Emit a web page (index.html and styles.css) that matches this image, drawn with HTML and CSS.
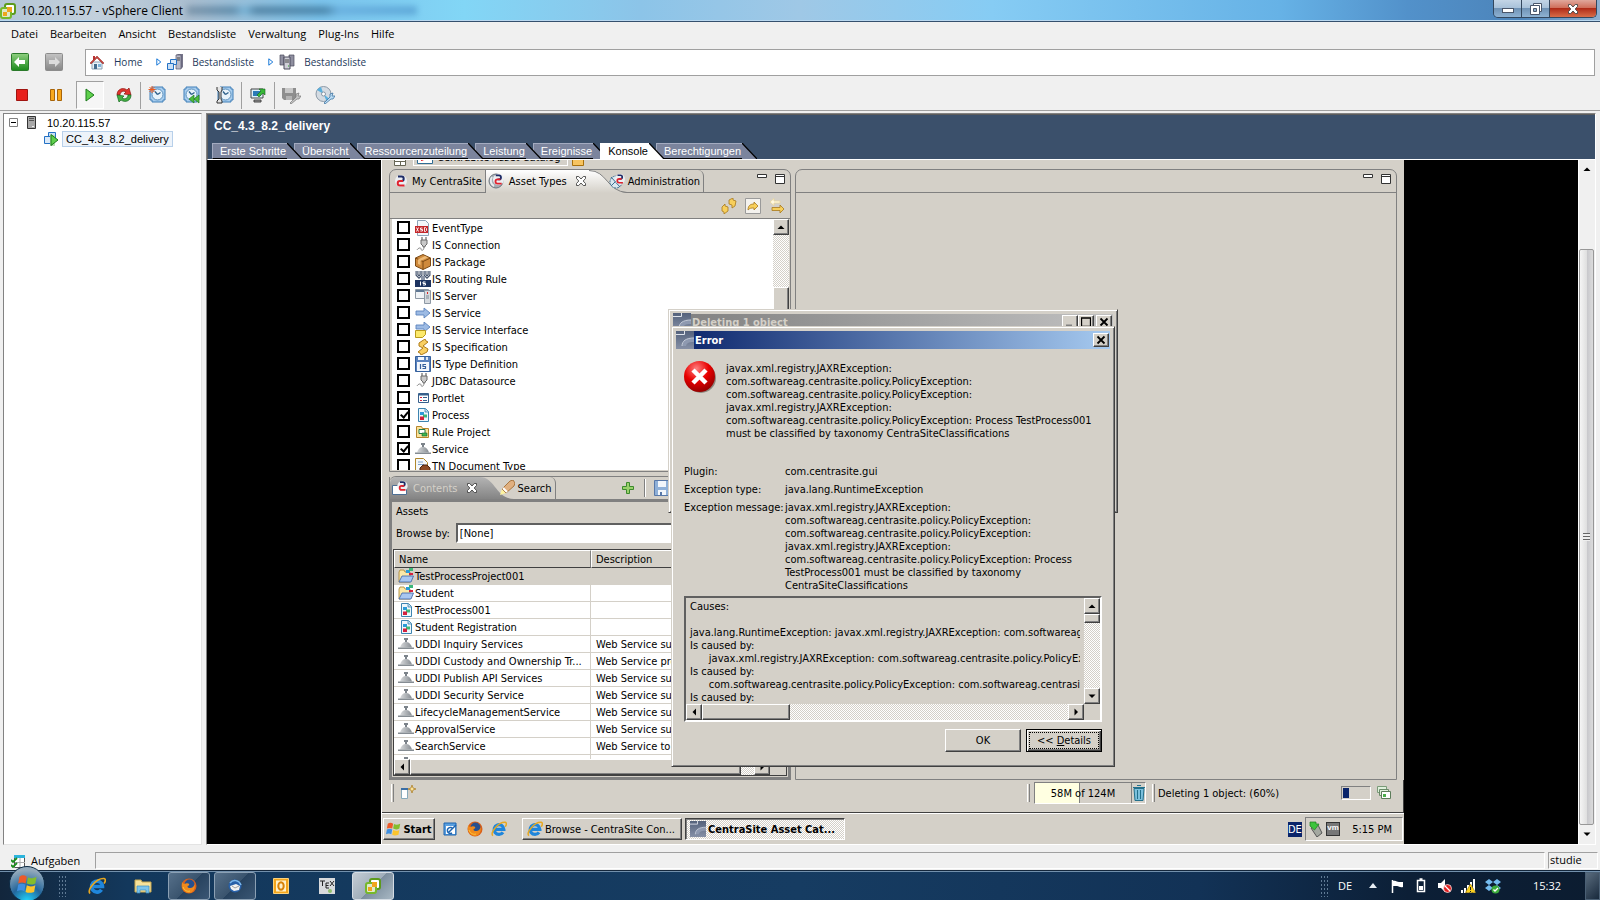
FILE: index.html
```html
<!DOCTYPE html>
<html lang="de">

<head>
    <meta charset="UTF-8">
    <meta name="viewport" content="width=device-width, initial-scale=1.0">
    <title>10.20.115.57 - vSphere Client</title>
    <link rel="stylesheet" href="styles.css">
</head>

<body>
    <!-- shared icons -->
    <svg class="sprite" aria-hidden="true">
        <defs>
            <linearGradient id="gGreen" x2="0" y2="1"><stop offset="0" stop-color="#8fd080"/><stop offset="1" stop-color="#1c8a1c"/></linearGradient>
            <linearGradient id="gGrey" x2="0" y2="1"><stop offset="0" stop-color="#c4c4c4"/><stop offset="1" stop-color="#868686"/></linearGradient>
            <linearGradient id="gBell" x2="1" y2="0"><stop offset="0" stop-color="#d8dadc"/><stop offset="1" stop-color="#868c92"/></linearGradient>
            <linearGradient id="gSteel" x2="0" y2="1"><stop offset="0" stop-color="#54627c"/><stop offset="1" stop-color="#8690a6"/></linearGradient>
            <linearGradient id="gTab" x2="0" y2="1"><stop offset="0" stop-color="#fff"/><stop offset="1" stop-color="#d4d0c8"/></linearGradient>
            <linearGradient id="gDark" x2="0" y2="1"><stop offset="0" stop-color="#b4b4b4"/><stop offset="1" stop-color="#848484"/></linearGradient>
            <radialGradient id="gRed" cx=".4" cy=".25" r=".8"><stop offset="0" stop-color="#ff8080"/><stop offset=".5" stop-color="#e80000"/><stop offset="1" stop-color="#8c0000"/></radialGradient>
            <radialGradient id="gOrb" cx=".5" cy="1" r=".9"><stop offset="0" stop-color="#20d8ff"/><stop offset=".5" stop-color="#23669c"/><stop offset="1" stop-color="#93a9bb"/></radialGradient>
        </defs>
        <symbol id="vsphere" viewBox="0 0 16 16">
            <rect x="5" y="1" width="10" height="10" rx="2" fill="#fff" stroke="#5c9a1c" stroke-width="2"/>
            <rect x="1" y="5" width="10" height="10" rx="2" fill="#dfe9c8" stroke="#76b82a" stroke-width="2"/>
            <path d="M3 9h4v4H3zM7 4h5v5H7z" fill="#f0a51c"/>
        </symbol>
        <symbol id="clock" viewBox="0 0 18 18">
            <path d="M4 1h11v2h2v11h-2v2H4v-2H2V3h2z" fill="#a8cdee" stroke="#3f7fb8"/>
            <circle cx="9.500" cy="8.500" r="5.500" fill="#e8f3fb" stroke="#5a90bd"/>
            <path d="M9.500 8.500L7 5.500M9.500 8.500l3-2" stroke="#2c5f8a" stroke-width="1.300" fill="none"/>
        </symbol>
        <symbol id="centra" viewBox="0 0 12 14">
            <circle cx="6" cy="7" r="6" fill="#eceef2"/>
            <path d="M3 2.500h3.500a2.200 2.200 0 0 1 0 4.400H5" fill="none" stroke="#1d2c66" stroke-width="2"/>
            <path d="M9.500 11.500H5a2.300 2.300 0 0 1 0-4.600h3" fill="none" stroke="#e0232e" stroke-width="2"/>
        </symbol>
        <symbol id="app" viewBox="0 0 18 18">
            <path d="M0 0h18v18H0z" fill="url(#gSteel)"/>
            <path d="M0 3.500h8.500V0" fill="none" stroke="#dfe4ec"/>
            <path d="M6 15c0-5 4-8 12-8v4c-6 0-7 1-8 4z" fill="#8e99b0"/>
            <path d="M6 15c0-5 4-8 12-8" fill="none" stroke="#c4cbd8"/>
        </symbol>
        <symbol id="plug" viewBox="0 0 16 16">
            <path d="M7 0v3M11 0v3" stroke="#888" stroke-width="1.500"/>
            <path d="M6 3h6v4l-2 2v1H8V9L6 7z" fill="#c9c9c9" stroke="#6a6a6a"/>
            <path d="M9 10c0 4-3 4-3 2s-3-1-4 1" fill="none" stroke="#8a8a8a"/>
        </symbol>
        <symbol id="bell" viewBox="0 0 16 16">
            <path d="M6 2h4v2H9v2H7V4H6z" fill="#7c838a"/>
            <path d="M2 11.500C3 8 5 6 8 6s5 2 6 5.500z" fill="url(#gBell)"/>
            <path d="M0 11.500h16v1.500H0z" fill="#858c92"/>
        </symbol>
        <symbol id="process" viewBox="0 0 16 16">
            <path d="M3.500 1.500h7l3 3v10h-10z" fill="#eef7fc" stroke="#3d84b0"/>
            <path d="M10 1.500V5h3.500" fill="#bcdcee" stroke="#3d84b0" stroke-width=".8"/>
            <path d="M5 5h4v3H5z" fill="#2d9bd8"/><path d="M8 7.500h4v3H8z" fill="#3cb878"/><path d="M5 9.500h4V13H5z" fill="#d4213d"/>
        </symbol>
        <symbol id="folder" viewBox="0 0 16 16">
            <path d="M1 14V4l1-2h4l1 2h5v10z" fill="#fbe9a8" stroke="#a8812f" stroke-width=".8"/>
            <path d="M1 14l3-6h11.500L13 14z" fill="#a9c7f0" stroke="#3a62a8" stroke-width=".8"/>
            <path d="M8 2h4v3H8z" fill="#2d9bd8"/><path d="M11 0h4v3h-4z" fill="#3cb878"/><path d="M11 5h4v2h-4z" fill="#d4213d"/>
        </symbol>
        <symbol id="arrow" viewBox="0 0 16 16">
            <path d="M1 6h8V3l6 5-6 5v-3H1z" fill="#9dbbe4" stroke="#5b83bd" stroke-width=".9"/>
        </symbol>
        <symbol id="ie" viewBox="0 0 18 18">
            <path d="M13.500 12.800A5.500 5.500 0 1 1 14.500 9.500H5" fill="none" stroke="#1f86dc" stroke-width="3.600"/>
            <path d="M2 16.500C-1 13 8 1 16 1.500c2 .5 1.500 3 0 5" fill="none" stroke="#e8a820" stroke-width="1.700"/>
        </symbol>
        <symbol id="firefox" viewBox="0 0 16 16">
            <circle cx="8" cy="8" r="7.500" fill="#d9601a"/>
            <circle cx="8.500" cy="6.500" r="5" fill="#27508f"/>
            <path d="M1 4c1 2 2 2 4 1.500C7 5 9 6 8 7.500c-2 0-2 2 0 2.500 3 .5 5-1 5.500-4C15 10 12 15 8 15S0 11 1 4z" fill="#f08a1c"/>
            <path d="M2 9c1 3 4 5 7 4" fill="none" stroke="#fbc63c"/>
        </symbol>
        <symbol id="winflag" viewBox="0 0 18 18">
            <path d="M2 3c2-1.500 4-1.500 6 0L7 8.500c-2-1-4-1-6 0z" fill="#ee5a28"/>
            <path d="M9 3.500c2 1 4 1 7-.5L15 8.500c-3 1.500-5 1-7 0z" fill="#84bd2b"/>
            <path d="M1 9.500c2-1 4-1 6 0L6 15c-2-1.500-4-1-6 0z" fill="#3f8fe0"/>
            <path d="M8 10c2 1 4 1.500 7 0l-1 5.500c-3 1-5 1-7 0z" fill="#fbc42b"/>
        </symbol>
        <symbol id="viewmin" viewBox="0 0 10 12"><path d="M.5 1.500h9v3h-9z" fill="#fff" stroke="#333"/></symbol>
        <symbol id="viewmax" viewBox="0 0 10 12"><path d="M.5 1.500h9v9h-9z" fill="#fff" stroke="#333"/><path d="M1 3.500h8" stroke="#333"/></symbol>
        <symbol id="closex" viewBox="0 0 10 10"><path d="M.5.500h2.200L5 3l2.300-2.500h2.200v2L7.200 5l2.300 2.500v2H7.300L5 7 2.700 9.500H.5v-2L2.800 5 .5 2.500z" fill="#fff" stroke="#444" stroke-width=".9"/></symbol>
        <symbol id="up" viewBox="0 0 8 8"><path d="M.5 6h7L4 2.500z"/></symbol>
        <symbol id="down" viewBox="0 0 8 8"><path d="M.5 2.500h7L4 6z"/></symbol>
        <symbol id="left" viewBox="0 0 8 8"><path d="M6 .5v7L2.500 4z"/></symbol>
        <symbol id="right" viewBox="0 0 8 8"><path d="M2.500.500v7L6 4z"/></symbol>
        <symbol id="slope" viewBox="0 0 15 15" preserveAspectRatio="none"><path d="M0 0l15 15H0z" fill="currentColor"/><path d="M0 0l15 15" stroke="#000" stroke-width="1.200"/></symbol>
        <symbol id="xbtn" viewBox="0 0 10 10"><path d="M1.500 1.500l7 7M8.500 1.500l-7 7" stroke="#000" stroke-width="1.800"/></symbol>
    </svg>

    <header class="titlebar">
        <svg class="icon"><use href="#vsphere"/></svg>
        <h1>10.20.115.57 - vSphere Client</h1>
        <span class="glass-smudge"></span>
        <div class="caption-buttons">
            <button class="cap" aria-label="Minimieren"><svg width="12" height="10"><rect x=".5" y="4.500" width="11" height="4" fill="#fff" stroke="#4a566a"/></svg></button>
            <button class="cap" aria-label="Wiederherstellen"><svg width="12" height="12"><path d="M3.500.500h8v8h-8z" fill="#fff" stroke="#4a566a"/><path d="M.5 2.500h9v9h-9z" fill="#fff" stroke="#4a566a"/><path d="M3.500 5.500h3v3h-3z" fill="#8fb0cc" stroke="#4a566a"/></svg></button>
            <button class="cap cap-close" aria-label="Schließen"><svg width="12" height="10"><use href="#closex"/></svg></button>
        </div>
    </header>

    <nav class="menubar">
        <a href="#">Datei</a>
        <a href="#">Bearbeiten</a>
        <a href="#">Ansicht</a>
        <a href="#">Bestandsliste</a>
        <a href="#">Verwaltung</a>
        <a href="#">Plug-Ins</a>
        <a href="#">Hilfe</a>
    </nav>

    <div class="navrow">
        <button class="plain" aria-label="Zurück"><svg width="18" height="18"><rect x=".5" y=".5" width="17" height="17" rx="1" fill="url(#gGreen)" stroke="#2b7a2b"/><path d="M3 9l5-5v3h6v4H8v3z" fill="#fff"/></svg></button>
        <button class="plain" aria-label="Vor"><svg width="18" height="18"><rect x=".5" y=".5" width="17" height="17" rx="1" fill="url(#gGrey)" stroke="#8c8c8c"/><path d="M15 9l-5-5v3H4v4h6v3z" fill="#dcdcdc"/></svg></button>
        <div class="address">
            <svg class="icon" viewBox="0 0 16 16"><path d="M3 8h10v7H3z" fill="#eaf2f8" stroke="#8aa0b4"/><path d="M4 2h2v4H4z" fill="#b33"/><path d="M1 9l7-7 7 7-1 1-6-6-6 6z" fill="#c8403a" stroke="#8c2a26" stroke-width=".5"/><path d="M5 10h3v5H5z" fill="#456c8e"/><path d="M9 10h3v3H9z" fill="#7fb2d8"/></svg>
            <a href="#">Home</a>
            <svg class="chev" viewBox="0 0 6 8"><path d="M.8.800L4.800 4 .8 7.200z" fill="#fff" stroke="#1878d8"/></svg>
            <svg class="icon" viewBox="0 0 16 16"><path d="M9 1l2-1h5v13l-2 2H9z" fill="#77768a"/><path d="M9 1h5v14H9z" fill="#b9b9c6" stroke="#55546a" stroke-width=".7"/><path d="M10 4h3M10 6h3" stroke="#444"/><path d="M3.500 5.500h6v5h-6z" fill="#dbe9f8" stroke="#2471c4"/><path d="M.5 9.500h6v6h-6z" fill="#c8def5" stroke="#2471c4"/></svg>
            <a href="#">Bestandsliste</a>
            <svg class="chev" viewBox="0 0 6 8"><path d="M.8.800L4.800 4 .8 7.200z" fill="#fff" stroke="#1878d8"/></svg>
            <svg class="icon" viewBox="0 0 16 16"><path d="M1 1h4v10H1zM10 1h5v11h-5z" fill="#8f8fa0" stroke="#4b4a5c" stroke-width=".7"/><path d="M5 3h6v12H5z" fill="#cfcfd8" stroke="#4b4a5c"/><path d="M6 6h4M6 8h4" stroke="#444"/><path d="M9 12h1" stroke="#2a2"/></svg>
            <a href="#">Bestandsliste</a>
        </div>
    </div>

    <div class="toolbar">
        <button class="tool" aria-label="Ausschalten"><svg width="12" height="12"><path d="M.5.500h11v11H.5z" fill="#e8201c" stroke="#a01410"/></svg></button>
        <button class="tool" aria-label="Anhalten"><svg width="12" height="12"><path d="M.5.500h4v11h-4zM7.500.500h4v11h-4z" fill="#f8a81c" stroke="#a86408"/></svg></button>
        <button class="tool pressed" aria-label="Einschalten"><svg width="10" height="14"><path d="M1 1l8 6-8 6z" fill="#5fd04c" stroke="#1d7a1d"/></svg></button>
        <button class="tool" aria-label="Zurücksetzen"><svg width="18" height="18"><path d="M2 9C2 3 8 1 12 4l2-2 2 7-7-1 2-2C8 4 5 6 5 9z" fill="#e0352e" stroke="#8c1410" stroke-width=".7"/><path d="M16 9c0 6-6 8-10 5l-2 2-2-7 7 1-2 2c3 2 6 0 6-3z" fill="#44b044" stroke="#14661c" stroke-width=".7"/></svg></button>
        <span class="sep"></span>
        <button class="tool" aria-label="Snapshot erstellen"><svg width="18" height="18"><use href="#clock"/><path d="M4 0v7M.5 3.500h7M1.500 1l5 5M6.500 1l-5 5" stroke="#f05a1c"/></svg></button>
        <button class="tool" aria-label="Snapshot wiederherstellen"><svg width="18" height="18"><use href="#clock"/><path d="M12 9v8l-5-4zM17 9v8l-5-4z" fill="#4cbc3c" stroke="#1d7a1d" stroke-width=".7"/></svg></button>
        <button class="tool" aria-label="Snapshot-Manager"><svg width="18" height="18"><use href="#clock"/><path d="M1 1v3l2 2v7l-2 2v2h5v-2l-1-2V6l1-2V1" stroke="#333" fill="#e4e4e4"/></svg></button>
        <span class="sep"></span>
        <button class="tool" aria-label="Konsole starten"><svg width="16" height="16"><path d="M1 2h12v9H1z" fill="#dff1fb" stroke="#444"/><path d="M3 4h8v5H3z" fill="#2c7ab8"/><path d="M4 13h7v2H4z" fill="#999" stroke="#444"/><path d="M7 8l4-4-2-2h6v6l-2-2-4 4z" fill="#38b838" stroke="#14661c" stroke-width=".6"/></svg></button>
        <span class="sep"></span>
        <button class="tool" aria-label="Diskette verbinden"><svg width="20" height="18"><path d="M1 2h14v12H3l-2-2z" fill="#8e8e8e"/><path d="M4 2h8v5H4z" fill="#c8c8c8"/><path d="M5 10h6v4H5z" fill="#b4b4b4"/><path d="M9 17l6-6 0-3 3-1-1 3 3 0-2 3h-2l-6 5z" fill="#c4c4c4" stroke="#777" stroke-width=".7"/></svg></button>
        <button class="tool" aria-label="CD verbinden"><svg width="20" height="18"><circle cx="8.500" cy="8" r="7.500" fill="#d4dbe2" stroke="#8a98a6"/><path d="M8.500 8L2 4a7.500 7.500 0 0 1 4-3zM8.500 8l6 5a7.500 7.500 0 0 1-3 2z" fill="#5bb0dd"/><circle cx="8.500" cy="8" r="2" fill="#fff" stroke="#8a98a6"/><path d="M9 17l6-6 0-3 3-1-1 3 3 0-2 3h-2l-6 5z" fill="#bcdcf4" stroke="#2f6a9c" stroke-width=".7"/></svg></button>
    </div>

    <main class="main">
        <aside class="tree">
            <div class="tree-row">
                <svg width="9" height="9"><path d="M.5.500h8v8h-8z" fill="#fff" stroke="#808080"/><path d="M2 4.500h5" stroke="#000"/></svg>
                <svg class="host" width="9" height="13"><path d="M.5.500h8v12h-8z" fill="#a8a8a8" stroke="#333"/><path d="M2 2.500h5M2 4.500h5" stroke="#555"/><path d="M5 10.500h2" stroke="#eee"/></svg>
                <span>10.20.115.57</span>
            </div>
            <div class="tree-row child">
                <svg width="16" height="16"><path d="M4.500 1.500h7v7h-7z" fill="#c8def5" stroke="#2471c4"/><path d="M.5 5.500h7v7h-7z" fill="#dbe9f8" stroke="#2471c4"/><path d="M6 4h5v11H6z" fill="#b8e0b0"/><path d="M7 3.500l7 5.500-7 5.500z" fill="#5fd04c" stroke="#1d7a1d"/></svg>
                <span class="selected">CC_4.3_8.2_delivery</span>
            </div>
        </aside>

        <section class="content">
            <div class="vm-head">
                <h2>CC_4.3_8.2_delivery</h2>
                <nav class="tabs">
                    <a href="#"><span>Erste Schritte</span><svg><use href="#slope"/></svg></a>
                    <a href="#"><span>Übersicht</span><svg><use href="#slope"/></svg></a>
                    <a href="#"><span>Ressourcenzuteilung</span><svg><use href="#slope"/></svg></a>
                    <a href="#"><span>Leistung</span><svg><use href="#slope"/></svg></a>
                    <a href="#"><span>Ereignisse</span><svg><use href="#slope"/></svg></a>
                    <a href="#" class="active"><span>Konsole</span><svg><use href="#slope"/></svg></a>
                    <a href="#"><span>Berechtigungen</span><svg><use href="#slope"/></svg></a>
                </nav>
            </div>

            <div class="console">
                <div class="screen">
                    <div class="guest">
                        <div class="perspectives">
                            <svg width="12" height="12"><path d="M.5.500h11v11H.5zM.5 7.500h11M6.500 7v4" fill="#fff" stroke="#665"/></svg>
                            <span class="perspective"><svg width="16" height="14"><path d="M.5.500h15v13H.5z" fill="#fff" stroke="#2f6c94"/><path d="M4 10c3 0 3-3 8-3" stroke="#e0232e" stroke-width="2" fill="none"/></svg>CentraSite Asset Catalog</span>
                            <svg width="12" height="12"><path d="M.5.500h11v11H.5z" fill="#f7c460" stroke="#a8700c"/></svg>
                        </div>

                        <div class="workbench">
                            <div class="left-col">
                                <section class="view types-view">
                                    <div class="view-tabs">
                                        <button class="vtab"><svg width="12" height="14"><use href="#centra"/></svg>My CentraSite</button>
                                        <button class="vtab on"><svg width="17" height="16"><circle cx="8" cy="8" r="7" fill="#a5adb5" stroke="#6d757d"/><path d="M4 4a6 6 0 0 0 2 9" stroke="#e8ecef" stroke-width="2" fill="none"/><use href="#centra" x="5" y="0" width="11" height="13"/></svg>Asset Types<svg class="x" width="10" height="10"><use href="#closex"/></svg></button>
                                        <svg class="curve" width="38" height="23" viewBox="0 0 38 23"><path d="M0 0c18 0 18 22 38 23H0z" fill="url(#gTab)"/><path d="M0 .5c18 0 18 21 38 22" fill="none" stroke="#808080"/></svg>
                                        <button class="vtab last"><svg width="16" height="16"><circle cx="7" cy="9" r="6" fill="#dbe8f0" stroke="#3d6f92" stroke-dasharray="2 1"/><path d="M2 4l9 10M11 4L2 13" stroke="#3d6f92"/><use href="#centra" x="6" y="0" width="10" height="12"/></svg>Administration</button>
                                        <span class="view-ctl"><svg width="10" height="12"><use href="#viewmin"/></svg><svg width="10" height="12"><use href="#viewmax"/></svg></span>
                                    </div>
                                    <div class="view-tools">
                                        <svg width="16" height="16"><path d="M8 2l4-2v2l3 1-1 5-3 2V7L8 6zM1 9l3-3v2l3 1v4l-4 3v-2l-2-1z" fill="#f7cf5c" stroke="#a8781c" stroke-width=".8"/></svg>
                                        <svg width="16" height="16"><path d="M.5.500h15v15H.5z" fill="#f4f2ee" stroke="#9a9a9a"/><path d="M3 12c0-5 3-6 6-6V4l4 4-4 4v-2c-3 0-4 0-6 2z" fill="#f7cf5c" stroke="#a8781c" stroke-width=".8"/></svg>
                                        <svg width="16" height="16"><path d="M1 4l4-3.500V3h6v2H5v2.500z" fill="#fff8e0" stroke="#e8d49a" stroke-width=".8"/><path d="M15 11l-4-4v2.500H3v3h8V15z" fill="#f7cf5c" stroke="#a8781c" stroke-width=".8"/></svg>
                                    </div>
                                    <div class="types">
                                        <ul class="type-list">
                                            <li><input type="checkbox" id="t1"><svg class="icon"><path d="M2.500.500h8l3 3v12h-11z" fill="#f4f8fb" stroke="#8ea4b8"/><path d="M0 6h13v7H0z" fill="#c4282c"/><path d="M1.500 7.500l2 4M3.500 7.500l-2 4M7.500 8H5.500v1.500h2V11H5.300M9.500 7.500v4h1l1-1V8.500l-1-1z" stroke="#fff" stroke-width=".9" fill="none"/></svg><label for="t1">EventType</label></li>
                                            <li><input type="checkbox" id="t2"><svg class="icon"><use href="#plug"/></svg><label for="t2">IS Connection</label></li>
                                            <li><input type="checkbox" id="t3"><svg class="icon"><path d="M8 .5l7.500 3.500v8L8 15.500.5 12V4z" fill="#cf8a3c" stroke="#7c4a14"/><path d="M.5 4L8 7.500 15.500 4M8 7.500v8" stroke="#7c4a14" fill="none"/><path d="M3 5.500l7-3.500 3 1.500-7.500 3.500v4L3 10z" fill="#eebb78"/></svg><label for="t3">IS Package</label></li>
                                            <li><input type="checkbox" id="t4"><svg class="icon"><path d="M2 0v4l2 2 2-2V0M10 0v4l2 2 2-2V0" fill="none" stroke="#4a5870" stroke-width="3"/><path d="M2 0v4l2 2 2-2V0M10 0v4l2 2 2-2V0" fill="none" stroke="#b4bcc8"/><path d="M6 5h4v4H6z" fill="#8c96a8"/><path d="M0 9h16v7H0z" fill="#1d3360"/><path d="M5.500 10.500v4M10.500 11H8v1.500h2.500V14H8" stroke="#fff" fill="none"/></svg><label for="t4">IS Routing Rule</label></li>
                                            <li><input type="checkbox" id="t5"><svg class="icon"><path d="M.5 1.500h13v9H.5z" fill="#f0f3f6" stroke="#8d98a4"/><path d="M1 2h12v2H1z" fill="#5f7894"/><path d="M9.500 2.500h6v13h-6z" fill="#d6dade" stroke="#8d98a4"/><path d="M12 4h1v2h-1z" fill="#d22"/><path d="M11 8h3M11 10h3" stroke="#7c8894"/></svg><label for="t5">IS Server</label></li>
                                            <li><input type="checkbox" id="t6"><svg class="icon"><use href="#arrow"/></svg><label for="t6">IS Service</label></li>
                                            <li><input type="checkbox" id="t7"><svg class="icon"><use href="#arrow" y="-3"/><path d="M.5 8.500h10v4l-3 3h-7z" fill="#fce96a" stroke="#b89a1c"/></svg><label for="t7">IS Service Interface</label></li>
                                            <li><input type="checkbox" id="t8"><svg class="icon"><path d="M4 4l6-4 1 2 2 1-5 4 5 3-1 3-6 3-1-2-2-1 5-4-4-2z" fill="#f9cf62" stroke="#b07c18"/></svg><label for="t8">IS Specification</label></li>
                                            <li><input type="checkbox" id="t9"><svg class="icon"><path d="M.5.500h15v15H.5z" fill="#5a82bd" stroke="#35609c"/><path d="M2 6h12v9H2zM3 1h6v3H3z" fill="#f3f7fc"/><path d="M5.500 8v5M11 8.500H8v2h2.500v2H7.500" stroke="#35609c" stroke-width="1.200" fill="none"/><path d="M11 1h2v3h-2z" fill="#dce6f2"/></svg><label for="t9">IS Type Definition</label></li>
                                            <li><input type="checkbox" id="t10"><svg class="icon"><use href="#plug"/></svg><label for="t10">JDBC Datasource</label></li>
                                            <li><input type="checkbox" id="t11"><svg class="icon"><path d="M3.500 3.500h10v9h-10z" fill="#fff" stroke="#37608c"/><path d="M4 4h9v1.500H4z" fill="#37608c"/><path d="M5 7.500h2M5 10.500h2" stroke="#d4213d"/><path d="M8 7.500h4M8 10.500h4" stroke="#37608c"/></svg><label for="t11">Portlet</label></li>
                                            <li><input type="checkbox" id="t12" checked><svg class="icon"><use href="#process"/></svg><label for="t12">Process</label></li>
                                            <li><input type="checkbox" id="t13"><svg class="icon"><path d="M1.500 13.500v-11h5l1 2h6v9z" fill="#fbe29a" stroke="#b5852c"/><path d="M4 5.500h6v4H4z" fill="#fff" stroke="#1d7a4c"/><path d="M7 9h5v3H7z" fill="#3cb850" stroke="#1d5a2c" stroke-width=".6"/></svg><label for="t13">Rule Project</label></li>
                                            <li><input type="checkbox" id="t14" checked><svg class="icon"><use href="#bell"/></svg><label for="t14">Service</label></li>
                                            <li><input type="checkbox" id="t15"><svg class="icon"><path d="M.5.500h8l4 4v11H.5z" fill="#f4f8fb" stroke="#b0882c"/><path d="M3 4h5M3 6.500h6" stroke="#7ea2cc"/><path d="M5 10l3-3h4l3 3v6H5z" fill="#8c4a24" stroke="#4a220c"/></svg><label for="t15">TN Document Type</label></li>
                                        </ul>
                                        <div class="vscroll">
                                            <button class="sb" aria-label="Nach oben"><svg width="8" height="8"><use href="#up"/></svg></button>
                                            <span class="list-track"></span>
                                            <span class="thumb fill"></span>
                                        </div>
                                    </div>
                                </section>

                                <section class="view contents-view">
                                    <div class="view-tabs dark">
                                        <button class="vtab on"><svg width="17" height="16"><path d="M.5 5.500h5l2 2 2-2h5v9h-14z" fill="#fff" stroke="#4d6f94"/><use href="#centra" x="5" y="0" width="11" height="12"/></svg>Contents<svg class="x" width="10" height="10"><use href="#closex"/></svg></button>
                                        <svg class="curve" width="34" height="22" viewBox="0 0 34 22"><path d="M0 0c15 0 16 22 34 22H0z" fill="url(#gDark)"/></svg>
                                        <button class="vtab last"><svg width="16" height="16"><path d="M1 15l2-6 4 4z" fill="#fdf4a0"/><path d="M3 9l8-8 3-1 2 3-1 3-8 7z" fill="#e0b080" stroke="#9a6428" stroke-width=".8"/><path d="M4 8l4 4" stroke="#fff" stroke-width="2"/></svg>Search</button>
                                        <svg class="plus" width="12" height="12"><path d="M4.500.500h3v4h4v3h-4v4h-3v-4h-4v-3h4z" fill="#9ad06c" stroke="#3c8a2c"/></svg>
                                        <span class="tool-sep"></span>
                                        <svg width="16" height="16"><path d="M.5.500h15v15H.5z" fill="#8fb0d8" stroke="#5878a8"/><path d="M4 1h8v6H4zM4 10h8v5H4z" fill="#f2f6fb"/><path d="M6 12h2v3H6z" fill="#5878a8"/></svg>
                                    </div>
                                    <div class="contents-body">
                                        <div class="assets">Assets</div>
                                        <div class="browse">
                                            <label for="browse">Browse by:</label>
                                            <select id="browse"><option>[None]</option></select>
                                        </div>
                                        <div class="asset-box">
                                            <div class="asset-clip">
                                                <table class="asset-table">
                                                    <thead>
                                                        <tr><th class="name">Name</th><th>Description</th></tr>
                                                    </thead>
                                                    <tbody>
                                                        <tr class="picked"><td><svg class="icon"><use href="#folder"/></svg>TestProcessProject001</td><td></td></tr>
                                                        <tr><td><svg class="icon"><use href="#folder"/></svg>Student</td><td></td></tr>
                                                        <tr><td><svg class="icon"><use href="#process"/></svg>TestProcess001</td><td></td></tr>
                                                        <tr><td><svg class="icon"><use href="#process"/></svg>Student Registration</td><td></td></tr>
                                                        <tr><td><svg class="icon"><use href="#bell"/></svg>UDDI Inquiry Services</td><td>Web Service supporting</td></tr>
                                                        <tr><td><svg class="icon"><use href="#bell"/></svg>UDDI Custody and Ownership Tr...</td><td>Web Service providing</td></tr>
                                                        <tr><td><svg class="icon"><use href="#bell"/></svg>UDDI Publish API Services</td><td>Web Service supporting</td></tr>
                                                        <tr><td><svg class="icon"><use href="#bell"/></svg>UDDI Security Service</td><td>Web Service supporting</td></tr>
                                                        <tr><td><svg class="icon"><use href="#bell"/></svg>LifecycleManagementService</td><td>Web Service supporting</td></tr>
                                                        <tr><td><svg class="icon"><use href="#bell"/></svg>ApprovalService</td><td>Web Service supporting</td></tr>
                                                        <tr><td><svg class="icon"><use href="#bell"/></svg>SearchService</td><td>Web Service to search</td></tr>
                                                        <tr><td><svg class="icon"><use href="#bell"/></svg>ReportService</td><td>Web Service to report</td></tr>
                                                    </tbody>
                                                </table>
                                            </div>
                                            <div class="hscroll">
                                                <button class="sb" aria-label="Nach links"><svg width="8" height="8"><use href="#left"/></svg></button>
                                                <span class="thumb asset-thumb"></span>
                                                <span class="track"></span>
                                                <button class="sb" aria-label="Nach rechts"><svg width="8" height="8"><use href="#right"/></svg></button>
                                                <span class="corner"></span>
                                            </div>
                                        </div>
                                    </div>
                                </section>
                            </div>

                            <section class="view editor">
                                <div class="view-tabs">
                                    <span class="view-ctl"><svg width="10" height="12"><use href="#viewmin"/></svg><svg width="10" height="12"><use href="#viewmax"/></svg></span>
                                </div>
                            </section>
                        </div>

                        <div class="guest-status">
                            <span class="grip"></span>
                            <svg width="16" height="16"><path d="M.5 3.500h6v10h-6z" fill="#fff" stroke="#8ab"/><path d="M0 3h7v2H0z" fill="#3a6ea5"/><path d="M11 0l1 3 3 1-3 1-1 3-1-3-3-1 3-1z" fill="#fbe29a" stroke="#a8781c" stroke-width=".7"/></svg>
                            <span class="grip heap-grip"></span>
                            <span class="heap"><span class="used">58M of 124M</span><button class="plain trash" aria-label="Run Garbage Collector"><svg width="12" height="16"><path d="M1 3.500h10l-1 12H2z" fill="#7cc0dc" stroke="#22708c"/><path d="M0 2.500h12M4 .5h4M4.500 5v9M7.500 5v9" stroke="#22708c"/></svg></button></span>
                            <span class="grip"></span>
                            <span class="job">Deleting 1 object: (60%)</span>
                            <span class="job-bar"><i></i></span>
                            <svg width="14" height="14"><path d="M.5.500h9v6h-9z" fill="#dff0dc" stroke="#7a9a78"/><path d="M2.500 3.500h9v6h-9z" fill="#dff0dc" stroke="#6a8a68"/><path d="M4.500 5.500h9v7h-9z" fill="#fff" stroke="#5c7c5a"/><path d="M6 8h3v3H6z" fill="#4cb04c"/></svg>
                        </div>

                        <div class="guest-taskbar">
                            <button class="start"><svg width="16" height="16"><use href="#winflag"/></svg>Start</button>
                            <div class="quick">
                                <a href="#" aria-label="Outlook Express"><svg width="16" height="16"><path d="M1 2h12v12H1z" fill="#5aa0e0" stroke="#1c64b0"/><path d="M3 5h9v8H3z" fill="#fff"/><path d="M5 12l8-8M10 8a3 3 0 1 0-1 4" stroke="#1c64b0" stroke-width="1.500" fill="none"/></svg></a>
                                <a href="#" aria-label="Firefox"><svg width="16" height="16"><use href="#firefox"/></svg></a>
                                <a href="#" aria-label="Internet Explorer"><svg width="16" height="16"><use href="#ie"/></svg></a>
                            </div>
                            <button class="task"><svg width="16" height="16"><use href="#ie"/></svg>Browse - CentraSite Con...</button>
                            <button class="task current"><svg width="16" height="16"><use href="#app"/></svg>CentraSite Asset Cat...</button>
                            <span class="lang">DE</span>
                            <div class="guest-tray">
                                <svg width="14" height="16"><path d="M2 7l7-3 4 8-5 4z" fill="#a4a8a0" stroke="#555"/><path d="M1 1h6v2h3L5.500 9 1 5z" fill="#3cc43c" stroke="#1c7c1c" stroke-width=".7"/></svg>
                                <span class="vm-badge">vm</span>
                                <span class="guest-clock">5:15 PM</span>
                            </div>
                        </div>

                        <!-- open dialogs -->
                        <div class="dialog back">
                            <div class="dialog-title">
                                <svg width="18" height="18"><use href="#app"/></svg>
                                <span>Deleting 1 object</span>
                                <button class="db" aria-label="Minimize"><svg width="10" height="10"><path d="M1 8.500h6" stroke="#808080" stroke-width="2"/></svg></button>
                                <button class="db" aria-label="Maximize"><svg width="10" height="10"><path d="M.5 1h9v8.500h-9zM0 1h10" fill="none" stroke="#000" stroke-width="1.300"/></svg></button>
                                <button class="db gap" aria-label="Close"><svg width="10" height="10"><use href="#xbtn"/></svg></button>
                            </div>
                        </div>

                        <div class="dialog front">
                            <div class="dialog-title">
                                <svg width="18" height="18"><use href="#app"/></svg>
                                <span>Error</span>
                                <button class="db" aria-label="Close"><svg width="10" height="10"><use href="#xbtn"/></svg></button>
                            </div>
                            <div class="dialog-body">
                                <div class="message">
                                    <svg width="32" height="32"><circle cx="17" cy="17" r="15" fill="#8c887f"/><circle cx="15.500" cy="15.500" r="15.500" fill="url(#gRed)"/><path d="M9 9l13 13M22 9L9 22" stroke="#fff" stroke-width="4.500"/></svg>
                                    <p>javax.xml.registry.JAXRException:<br>com.softwareag.centrasite.policy.PolicyException:<br>com.softwareag.centrasite.policy.PolicyException:<br>javax.xml.registry.JAXRException:<br>com.softwareag.centrasite.policy.PolicyException: Process TestProcess001<br>must be classified by taxonomy CentraSiteClassifications</p>
                                </div>
                                <dl class="facts">
                                    <dt>Plugin:</dt>
                                    <dd>com.centrasite.gui</dd>
                                    <dt>Exception type:</dt>
                                    <dd>java.lang.RuntimeException</dd>
                                    <dt>Exception message:</dt>
                                    <dd>javax.xml.registry.JAXRException:<br>com.softwareag.centrasite.policy.PolicyException:<br>com.softwareag.centrasite.policy.PolicyException:<br>javax.xml.registry.JAXRException:<br>com.softwareag.centrasite.policy.PolicyException: Process<br>TestProcess001 must be classified by taxonomy<br>CentraSiteClassifications</dd>
                                </dl>
                                <div class="trace">
                                    <textarea readonly wrap="off" aria-label="Causes">Causes:

java.lang.RuntimeException: javax.xml.registry.JAXRException: com.softwareag.centrasite
Is caused by:
      javax.xml.registry.JAXRException: com.softwareag.centrasite.policy.PolicyException
Is caused by:
      com.softwareag.centrasite.policy.PolicyException: com.softwareag.centrasite.policy
Is caused by:</textarea>
                                    <div class="vscroll">
                                        <button class="sb" aria-label="Nach oben"><svg width="8" height="8"><use href="#up"/></svg></button>
                                        <span class="thumb trace-vthumb"></span>
                                        <span class="track"></span>
                                        <button class="sb" aria-label="Nach unten"><svg width="8" height="8"><use href="#down"/></svg></button>
                                    </div>
                                    <div class="hscroll">
                                        <button class="sb" aria-label="Nach links"><svg width="8" height="8"><use href="#left"/></svg></button>
                                        <span class="thumb trace-hthumb"></span>
                                        <span class="track"></span>
                                        <button class="sb" aria-label="Nach rechts"><svg width="8" height="8"><use href="#right"/></svg></button>
                                    </div>
                                </div>
                                <div class="actions">
                                    <button class="push">OK</button>
                                    <button class="push default"><span>&lt;&lt; <u>D</u>etails</span></button>
                                </div>
                            </div>
                        </div>
                    </div>
                </div>
                <div class="win-scroll">
                    <svg width="8" height="8"><use href="#up"/></svg>
                    <span class="win-thumb"><i></i></span>
                    <svg width="8" height="8"><use href="#down"/></svg>
                </div>
            </div>
        </section>
    </main>

    <footer class="statusbar">
        <button class="plain tasks"><svg width="14" height="14"><path d="M3.500 1.500h10v12h-10z" fill="#fff" stroke="#555"/><path d="M3 1h11v3H3z" fill="#2cb4dc"/><path d="M9 4v9M4 8.500h10" stroke="#aaa"/><path d="M0 6l2 2 4-4M0 11l2 2 4-4" stroke="#1c8c1c" stroke-width="1.800" fill="none"/></svg>Aufgaben</button>
        <span class="status-pane"></span>
        <span class="status-pane user">studie</span>
    </footer>

    <div class="taskbar">
        <button class="plain orb" aria-label="Start"><svg width="36" height="34" viewBox="0 0 36 34"><circle cx="18" cy="18" r="17.500" fill="url(#gOrb)" stroke="#0d2b45"/><use href="#winflag" x="8" y="7" width="22" height="22"/></svg></button>
        <span class="dots"></span>
        <div class="pinned">
            <a href="#" aria-label="Internet Explorer"><svg width="18" height="18"><use href="#ie"/></svg></a>
            <a href="#" aria-label="Explorer"><svg width="18" height="16"><path d="M1 2h6l1 2h9v10H1z" fill="#f7e29a" stroke="#c8a850"/><path d="M3 15V8h12v7h-3v-3H6v3z" fill="#7cc4ec" stroke="#3a8cc0" stroke-width=".7"/></svg></a>
            <a href="#" class="open" aria-label="Firefox"><svg width="16" height="16"><use href="#firefox"/></svg></a>
            <a href="#" class="open" aria-label="Thunderbird"><svg width="16" height="16"><circle cx="8" cy="8" r="6.500" fill="#2860a8"/><path d="M3 8l6-2 4 2-1 4-5 1-3-2z" fill="#f2f2f2"/><path d="M5 8l3 2 4-2" stroke="#888" fill="none" stroke-width=".8"/><path d="M3 5c3-4 9-3 11 2" stroke="#7cb8ec" fill="none" stroke-width="1.500"/></svg></a>
            <a href="#" aria-label="Outlook"><svg width="16" height="16"><path d="M.5.500h15v15H.5z" fill="#f3a51c" stroke="#fbd27c"/><path d="M3 2.500h10v11H3z" fill="#fff0c8"/><ellipse cx="8" cy="8" rx="2.700" ry="3.800" fill="none" stroke="#d88208" stroke-width="2"/></svg></a>
            <a href="#" aria-label="TeX"><svg width="16" height="16"><path d="M0 0h16v16H0z" fill="#d8dadc"/><path d="M1 3h5M3.500 3v5M7 5v5h3M7 5h3M7 7.500h2.500M11 3l4 5M15 3l-4 5" stroke="#222" fill="none"/><circle cx="11" cy="13" r="2" fill="#8fbf6c"/></svg></a>
            <a href="#" class="open focus" aria-label="vSphere Client"><svg width="16" height="16"><use href="#vsphere"/></svg></a>
        </div>
        <span class="dots tray-dots"></span>
        <span class="tray-lang">DE</span>
        <div class="tray">
            <span><svg width="8" height="5"><path d="M0 5l4-5 4 5z" fill="#e8eef4"/></svg></span>
            <span><svg width="14" height="14"><path d="M2.500 1v13" stroke="#fff" stroke-width="1.500"/><path d="M3 2c3-1 4 1 6 1h4v5c-3 1-4-1-6-1H3z" fill="#fff"/></svg></span>
            <span><svg width="10" height="15"><path d="M1.500 2.500h7v11h-7zM3.500 1h3" fill="none" stroke="#fff" stroke-width="1.500"/><path d="M3 8h4v4H3z" fill="#fff"/></svg></span>
            <span><svg width="14" height="14"><path d="M0 4h3l4-4v13L3 9H0z" fill="#fff"/><circle cx="9.500" cy="9.500" r="4" fill="#e02020" stroke="#fff" stroke-width=".7"/><path d="M7 7l5 5" stroke="#fff" stroke-width="1.300"/></svg></span>
            <span><svg width="15" height="14"><path d="M0 11h2v3H0zM3 9h2v5H3zM6 6h2v8H6zM9 3h2v11H9zM12 0h2v14h-2z" fill="#fff"/><path d="M9.500 5l5 8.500h-10z" fill="#fbd01c" stroke="#a88408" stroke-width=".7"/><path d="M9.500 8v3M9.500 12v1" stroke="#222"/></svg></span>
            <span><svg width="16" height="16"><path d="M4 1l4 3-4 3-4-3zM12 1l4 3-4 3-4-3zM4 7l4 3-4 3-4-3zM12 7l4 3-4 3-4-3z" fill="#74bcf0"/><circle cx="10.500" cy="11.500" r="4" fill="#3cac3c"/><path d="M8.500 11.500l1.500 1.500 3-3" stroke="#fff" stroke-width="1.300" fill="none"/></svg></span>
        </div>
        <span class="tray-clock">15:32</span>
        <button class="show-desktop" aria-label="Desktop anzeigen"></button>
    </div>
</body>

</html>
```
FILE: styles.css
```css
* {
    box-sizing: border-box;
}

body {
    margin: 0;
    height: 100vh;
    display: flex;
    flex-direction: column;
    overflow: hidden;
    background: #f0f0f0;
    color: #000;
    font: 11px/14px "Open Sans", "Noto Sans", sans-serif;
}

a {
    color: inherit;
    text-decoration: none;
}

button,
select,
textarea {
    font: inherit;
    color: inherit;
    border-radius: 0;
}

button {
    padding: 0;
    display: flex;
    align-items: center;
    justify-content: center;
}

svg {
    flex: none;
    display: block;
}

.sprite {
    width: 0;
    height: 0;
    position: absolute;
}

.icon {
    width: 16px;
    height: 16px;
}

.plain {
    border: 0;
    background: none;
}

/* title bar */
.titlebar {
    height: 22px;
    flex: none;
    display: flex;
    align-items: center;
    border-bottom: 1px solid #35506e;
    box-shadow: inset 0 -1px #b9d8f0;
    background: linear-gradient(90deg, #b4c6d6, #c3d0dc 6%, #a9bdcf 12%, #7cc4ec 20%, #82d6f6 29%, #8cc4e8 40%, #9fc8e6 50%, #86ccf4 62%, #66b2e6 80%, #5291ca 88%, #4c84ba 95%, #8fb0d0);
}

.titlebar h1 {
    margin: 0 0 0 5px;
    font-size: 12px;
    font-weight: 400;
}

.glass-smudge {
    width: 230px;
    height: 9px;
    margin-left: 4px;
    background: linear-gradient(90deg, #5f7c94, #3f7092 20%, #6ab0d8 25%, #2f6488 30%, #2f6488 60%, #5fa4d8 66%, #4a90c8);
    opacity: 0.6;
    filter: blur(3px);
}

.caption-buttons {
    margin: 0 3px 0 auto;
    align-self: flex-start;
    display: flex;
    border: 1px solid #33475e;
    border-top: 0;
    border-radius: 0 0 5px 5px;
    overflow: hidden;
}

.cap {
    width: 28px;
    height: 17px;
    border: 0;
    border-right: 1px solid #33475e;
    background: linear-gradient(#c3d5e6, #a9c2da 45%, #7093b6 50%, #8fb2d2);
}

.cap-close {
    width: 46px;
    border: 0;
    background: linear-gradient(#e0a89c, #d0705c 45%, #b02c18 50%, #d86c48);
}

/* menu and address bar */
.menubar {
    height: 24px;
    flex: none;
    padding-left: 11px;
    display: flex;
    align-items: center;
    gap: 12px;
}

.navrow {
    height: 34px;
    flex: none;
    padding: 0 5px 2px 11px;
    display: flex;
    align-items: center;
    gap: 16px;
}

.address {
    flex: 1;
    height: 27px;
    margin-left: 6px;
    padding: 0 3px;
    display: flex;
    align-items: center;
    border: 1px solid #a0a0a0;
    background: #fff;
    color: #1e395b;
    font-size: 10px;
}

.address a {
    margin: 0 14px 0 9px;
}

.chev {
    width: 6px;
    height: 8px;
    margin-right: 5px;
}

/* toolbar */
.toolbar {
    height: 31px;
    flex: none;
    padding: 0 5px;
    display: flex;
    align-items: center;
    border-bottom: 1px solid #a0a0a0;
}

.tool {
    width: 34px;
    height: 28px;
    border: 1px solid transparent;
    background: none;
}

.tool.pressed {
    width: 28px;
    margin: 0 3px;
    border-color: #a0a0a0 #fff #fff #a0a0a0;
    background: #f6f6f6;
}

.sep {
    width: 1px;
    height: 27px;
    margin: 0 -1px;
    background: #a0a0a0;
}

/* main area */
.main {
    flex: 1;
    min-height: 0;
    display: flex;
    gap: 4px;
    padding: 2px 4px 0 3px;
}

.tree {
    width: 199px;
    padding: 1px 5px;
    border: 1px solid #828282;
    border-right-color: #e3e3e3;
    border-bottom-color: #e3e3e3;
    background: #fff;
    font: 11px/14px "Liberation Sans", Arial, sans-serif;
}

.tree-row {
    height: 15px;
    display: flex;
    align-items: center;
}

.host {
    margin: 0 11px 0 9px;
}

.child {
    height: 17px;
    padding-left: 35px;
    gap: 2px;
}

.selected {
    padding: 0 3px;
    border: 1px solid #b8d0ea;
    background: #edf3fa;
}

.content {
    flex: 1;
    min-width: 0;
    display: flex;
    flex-direction: column;
    border: 1px solid #828282;
    border-right-color: #fff;
    border-bottom-color: #fff;
}

.vm-head {
    height: 46px;
    flex: none;
    display: flex;
    flex-direction: column;
    justify-content: space-between;
    border: 1px solid #5c5c5c;
    border-width: 1px 0 0 1px;
    border-bottom: 1px solid #fff;
    background: #3b506b;
    color: #fff;
    font: 11px/14px "Liberation Sans", Arial, sans-serif;
}

.vm-head h2 {
    margin: 4px 0 0 6px;
    font-size: 12px;
    line-height: 14px;
}

.tabs {
    display: flex;
    padding-left: 4px;
}

.tabs a {
    display: flex;
    height: 16px;
    margin-right: -8px;
    color: #7b849d;
}

.tabs span {
    padding: 0 1px 0 7px;
    border-top: 1px solid #a3abc0;
    border-left: 1px solid #a3abc0;
    border-bottom: 1px solid #000;
    background: #7b849d;
    color: #fff;
}

.tabs svg {
    position: relative;
    z-index: 1;
    width: 15px;
    height: 16px;
}

.tabs .active,
.tabs .active span {
    border-color: #fff;
    background: #fff;
    color: #000;
}

.tabs .active {
    z-index: 2;
    background: none;
    color: #fff;
}

/* console */
.console {
    flex: 1;
    min-height: 0;
    display: flex;
}

.screen {
    flex: 1;
    display: flex;
    justify-content: center;
    background: #000;
}

.guest {
    position: relative;
    flex: 0 1 1023px;
    display: flex;
    flex-direction: column;
    background: #d4d0c8;
    font: 11px/13px "DejaVu Sans Condensed", "Noto Sans", sans-serif;
    border-left: 1px solid #fff;
}

.perspectives {
    height: 9px;
    flex: none;
    padding: 0 0 3px 12px;
    display: flex;
    align-items: flex-end;
    gap: 4px;
    overflow: hidden;
}

.perspective {
    display: flex;
    align-items: center;
    gap: 4px;
    padding: 1px 6px 1px 3px;
    margin-left: 3px;
    border: 1px solid #fff;
}

.workbench {
    flex: 1;
    min-height: 0;
    padding: 0 7px;
    display: flex;
    gap: 4px;
}

.left-col {
    width: 402px;
    min-height: 0;
    display: flex;
    flex-direction: column;
    gap: 4px;
}

.view {
    display: flex;
    flex-direction: column;
    min-height: 0;
    border: 1px solid #808080;
    border-radius: 7px 7px 0 0;
}

.view-tabs {
    height: 23px;
    flex: none;
    display: flex;
    align-items: center;
    border-bottom: 1px solid #808080;
}

.vtab {
    height: 22px;
    padding: 0 3px 0 5px;
    gap: 5px;
    border: 0;
    border-right: 1px solid #808080;
    background: none;
    white-space: nowrap;
}

.vtab.on {
    height: 23px;
    padding-left: 2px;
    gap: 4px;
    border: 0;
    background: linear-gradient(#fff, #d4d0c8);
}

.vtab .x {
    margin-left: 5px;
}

.vtab.last {
    margin-left: -21px;
    padding-left: 3px;
    gap: 3px;
    border-radius: 0 6px 0 0;
}

.view-ctl {
    display: flex;
    gap: 8px;
    margin: 0 5px 4px auto;
}

.types-view {
    flex: 0 1 303px;
}

.view-tools {
    height: 26px;
    flex: none;
    padding-right: 5px;
    display: flex;
    align-items: center;
    justify-content: flex-end;
    gap: 8px;
    border-bottom: 1px solid #808080;
}

.types {
    flex: 1;
    min-height: 0;
    margin: 0 1px 1px 2px;
    display: flex;
    overflow: hidden;
    background: #fff;
}

.type-list {
    flex: 1;
    margin: 0;
    padding: 0 0 0 5px;
    list-style: none;
}

.type-list li {
    height: 17px;
    display: flex;
    align-items: center;
}

.type-list .icon {
    margin: 0 1px 0 5px;
}

.type-list label {
    padding-top: 2px;
}

input[type="checkbox"] {
    appearance: none;
    width: 13px;
    height: 13px;
    margin: 0;
    border: 2px solid #000;
    background: #fff;
}

input[type="checkbox"]:checked::before {
    content: "";
    display: block;
    width: 3px;
    height: 6px;
    margin: 0 0 0 3px;
    border: solid #000;
    border-width: 0 2px 2px 0;
    transform: rotate(40deg);
}

/* classic scrollbars */
.vscroll,
.hscroll {
    display: flex;
    background: repeating-conic-gradient(#fff 0 25%, #d4d0c8 0 50%) 0 0 / 2px 2px;
}

.vscroll {
    width: 16px;
    flex-direction: column;
}

.hscroll {
    height: 16px;
    flex: none;
}

.sb,
.thumb,
.push,
.start,
.task,
.db {
    border: 1px solid;
    border-color: #fff #404040 #404040 #fff;
    background: #d4d0c8;
    box-shadow: inset -1px -1px #808080;
}

.sb {
    width: 16px;
    height: 16px;
    flex: none;
}

.track {
    flex: 1;
}

.list-track {
    height: 52px;
}

.thumb.fill {
    flex: 1;
}

/* contents view */
.contents-view {
    flex: 1;
    border-width: 1px 0 0;
}

.view-tabs.dark {
    height: 22px;
    border-left: 1px solid #808080;
    border-bottom: 0;
}

.dark .vtab.on {
    height: 22px;
    background: linear-gradient(#b4b4b4, #848484);
    border-radius: 6px 0 0 0;
    color: #d4d0c8;
}

.dark .vtab.last {
    margin-left: -18px;
}

.plus {
    margin: 0 10px 0 auto;
}

.tool-sep {
    width: 2px;
    height: 18px;
    margin-right: 8px;
    border-left: 1px solid #808080;
    border-right: 1px solid #fff;
}

.dark > svg:last-child {
    margin-right: 121px;
}

.contents-body {
    flex: 1;
    min-height: 0;
    display: flex;
    flex-direction: column;
    border: 3px solid #808080;
}

.assets {
    padding: 3px 4px 5px;
}

.browse {
    display: flex;
    align-items: center;
    gap: 6px;
    height: 20px;
    padding: 0 8px 0 4px;
}

.browse select {
    appearance: none;
    flex: 1;
    height: 20px;
    padding: 0 2px;
    border: 2px solid;
    border-color: #606060 #fff #fff #606060;
    background: #fff;
}

.asset-box {
    flex: 1;
    min-height: 0;
    margin: 6px 1px 1px;
    display: flex;
    flex-direction: column;
    border: 1px solid #404040;
    background: #fff;
}

.asset-clip {
    flex: 1;
    min-height: 0;
    overflow: hidden;
}

.asset-table {
    width: 100%;
    table-layout: fixed;
    border-collapse: separate;
    border-spacing: 0;
}

.asset-table th {
    height: 18px;
    padding: 0 4px;
    text-align: left;
    font-weight: 400;
    background: #d4d0c8;
    border: 1px solid;
    border-color: #fff #808080 #404040 #fff;
}

.asset-table .name {
    width: 197px;
}

.asset-table td {
    height: 17px;
    padding: 1px 5px 0;
    border-right: 1px solid #d4d0c8;
    border-bottom: 1px solid #d4d0c8;
    white-space: nowrap;
    overflow: hidden;
}

.asset-table td:first-child {
    padding: 1px 4px 0;
}

.asset-table .icon {
    display: inline-block;
    vertical-align: top;
    margin: -2px 1px -2px 0;
}

.picked {
    background: #d4d0c8;
}

.asset-thumb {
    width: 331px;
}

.corner {
    width: 16px;
    background: #d4d0c8;
}

.editor {
    flex: 1;
}

/* guest status bar and taskbar */
.guest-status {
    height: 33px;
    flex: none;
    padding: 0 12px 6px 9px;
    display: flex;
    align-items: center;
    border-right: 1px solid #404040;
    border-bottom: 1px solid #404040;
}

.grip {
    width: 3px;
    height: 18px;
    margin-right: 7px;
    border-left: 1px solid #fff;
    border-right: 1px solid #808080;
}

.heap-grip {
    margin: 0 4px 0 auto;
}

.heap {
    display: flex;
    width: 112px;
    height: 22px;
    margin-right: 6px;
    border: 1px solid;
    border-color: #808080 #fff #fff #808080;
}

.used {
    flex: 1;
    padding-top: 4px;
    text-align: center;
    background: linear-gradient(90deg, #ffffe1 46%, #808080 46%, #808080 47%, #d4d0c8 47%);
}

.trash {
    width: 14px;
    border-left: 1px solid #808080;
}

.job {
    width: 183px;
    margin-left: -4px;
}

.job-bar {
    width: 30px;
    height: 14px;
    margin-right: 6px;
    padding: 1px;
    border: 1px solid;
    border-color: #808080 #fff #fff #808080;
}

.job-bar i {
    display: block;
    width: 6px;
    height: 10px;
    background: #0a246a;
}

.guest-taskbar {
    height: 31px;
    flex: none;
    padding: 0 1px;
    display: flex;
    align-items: center;
    border-top: 1px solid #fff;
}

.start {
    width: 52px;
    height: 22px;
    gap: 1px;
    font-weight: 700;
}

.quick {
    display: flex;
    gap: 8px;
    margin: 0 15px 0 8px;
}

.task {
    width: 160px;
    height: 22px;
    margin-right: 3px;
    padding: 0 4px;
    gap: 2px;
    justify-content: flex-start;
    white-space: nowrap;
}

.task.current {
    border-color: #404040 #fff #fff #404040;
    box-shadow: inset 1px 1px #808080;
    background: repeating-conic-gradient(#fff 0 25%, #d4d0c8 0 50%) 0 0 / 2px 2px;
    font-weight: 700;
}

.lang {
    width: 14px;
    margin: 0 3px 0 auto;
    padding: 1px 0;
    background: #0a246a;
    color: #fff;
}

.guest-tray {
    width: 98px;
    height: 24px;
    padding: 0 10px 0 3px;
    display: flex;
    align-items: center;
    gap: 3px;
    border: 1px solid;
    border-color: #808080 #fff #fff #808080;
}

.vm-badge {
    width: 14px;
    height: 14px;
    border: 1px solid #333;
    background: #777;
    color: #fff;
    font: 700 8px/10px "Liberation Sans", Arial, sans-serif;
    text-align: center;
}

.guest-clock {
    margin-left: auto;
}

/* dialogs */
.dialog {
    position: absolute;
    border: 1px solid;
    border-color: #d4d0c8 #404040 #404040 #d4d0c8;
    box-shadow: inset 1px 1px #fff, inset -1px -1px #808080;
    background: #d4d0c8;
    padding: 4px;
}

.dialog.back {
    left: 286px;
    top: 149px;
    width: 450px;
    height: 204px;
}

.dialog.front {
    left: 289px;
    top: 166px;
    width: 444px;
}

.dialog-title {
    height: 18px;
    padding-right: 1px;
    display: flex;
    align-items: center;
    background: linear-gradient(90deg, #0a246a, #a6caf0);
    color: #fff;
    font-weight: 700;
}

.back .dialog-title {
    height: 16px;
    background: linear-gradient(90deg, #808080, #c0c0c0);
    color: #d4d0c8;
}

.dialog-title span {
    flex: 1;
    padding-left: 1px;
}

.db {
    width: 16px;
    height: 14px;
}

.db.gap {
    margin-left: 2px;
}

.dialog-body {
    padding: 12px 8px 10px;
}

.message {
    display: flex;
    gap: 10px;
}

.message p {
    margin: 1px 0 0;
    white-space: nowrap;
}

.facts {
    margin: 25px 0 4px;
    display: grid;
    grid-template-columns: 101px 1fr;
    row-gap: 5px;
    white-space: nowrap;
}

.facts dd {
    margin: 0;
}

.trace {
    display: grid;
    grid-template-columns: 1fr 16px;
    border: 2px solid;
    border-color: #606060 #fff #fff #606060;
}

.trace textarea {
    height: 106px;
    margin-right: 4px;
    padding: 2px 0 0 4px;
    border: 0;
    background: none;
    resize: none;
    overflow: hidden;
}

.trace-vthumb {
    height: 9px;
}

.trace-hthumb {
    width: 88px;
}

.actions {
    display: flex;
    justify-content: flex-end;
    gap: 5px;
    margin: 7px 0 0;
}

.push {
    width: 76px;
    height: 23px;
}

.push.default {
    border-color: #000;
    box-shadow: inset 1px 1px #fff, inset -1px -1px #404040, inset -2px -2px #808080;
}

.push.default span {
    padding: 1px 7px;
    border: 1px dotted #000;
}

/* outer console scrollbar */
.win-scroll {
    width: 17px;
    padding: 5px 1px 6px 0;
    display: flex;
    flex-direction: column;
    align-items: center;
    background: #f0f0f0;
    border-left: 1px solid #fff;
}

.win-thumb {
    flex: 1;
    width: 15px;
    margin: 76px 0 5px;
    display: flex;
    align-items: center;
    justify-content: center;
    border: 1px solid #979797;
    border-radius: 2px;
    background: linear-gradient(90deg, #f5f5f5, #e0e0e0 50%, #c8c8cc 55%, #dcdcdc);
}

.win-thumb i {
    width: 7px;
    height: 8px;
    background: repeating-linear-gradient(#666 0 1px, #eee 1px 3px);
}

/* status bar */
.statusbar {
    height: 25px;
    flex: none;
    padding: 7px 2px 1px 11px;
    display: flex;
    gap: 3px;
}

.tasks {
    width: 81px;
    gap: 6px;
    justify-content: flex-start;
}

.status-pane {
    flex: 1;
    border: 1px solid #a0a0a0;
    border-right-color: #fff;
    border-bottom-color: #fff;
}

.status-pane.user {
    flex: none;
    width: 50px;
    padding-left: 1px;
}

/* desktop taskbar */
.taskbar {
    height: 30px;
    flex: none;
    display: flex;
    align-items: center;
    color: #fff;
    border-top: 1px solid #14273c;
    box-shadow: inset 0 1px #7290ac;
    background: linear-gradient(90deg, #12263c, #13385c 8%, #163c62 50%, #123256 75%, #0c1f36 88%, #0c1c30);
}

.orb {
    align-self: flex-end;
    margin-left: 9px;
}

.dots {
    width: 8px;
    height: 22px;
    margin: 0 10px 0 13px;
    background: radial-gradient(#5f7a94 30%, transparent 40%) 0 0 / 3px 4px;
}

.pinned {
    display: flex;
    gap: 4px;
}

.pinned a {
    width: 42px;
    height: 28px;
    display: flex;
    align-items: center;
    justify-content: center;
}

.pinned .open {
    border: 1px solid #8ba0b4;
    border-radius: 3px;
    background: linear-gradient(135deg, #56708a, #3a546e 50%, #27425e 51%, #3a5674);
}

.pinned .focus {
    background: linear-gradient(135deg, #c4ccd4, #a0aeba 50%, #7c8e9e 51%, #a8b8c4);
    border-color: #d4dce4;
}

.tray-dots {
    margin-left: auto;
}

.tray-lang {
    width: 23px;
}

.tray {
    display: flex;
}

.tray span {
    width: 24px;
    display: flex;
    align-items: center;
    justify-content: center;
}

.tray-clock {
    margin: 0 24px 0 28px;
}

.show-desktop {
    width: 15px;
    height: 28px;
    border: 1px solid #4a5f74;
    background: linear-gradient(135deg, #5a6c7e, #18293c);
}
```
